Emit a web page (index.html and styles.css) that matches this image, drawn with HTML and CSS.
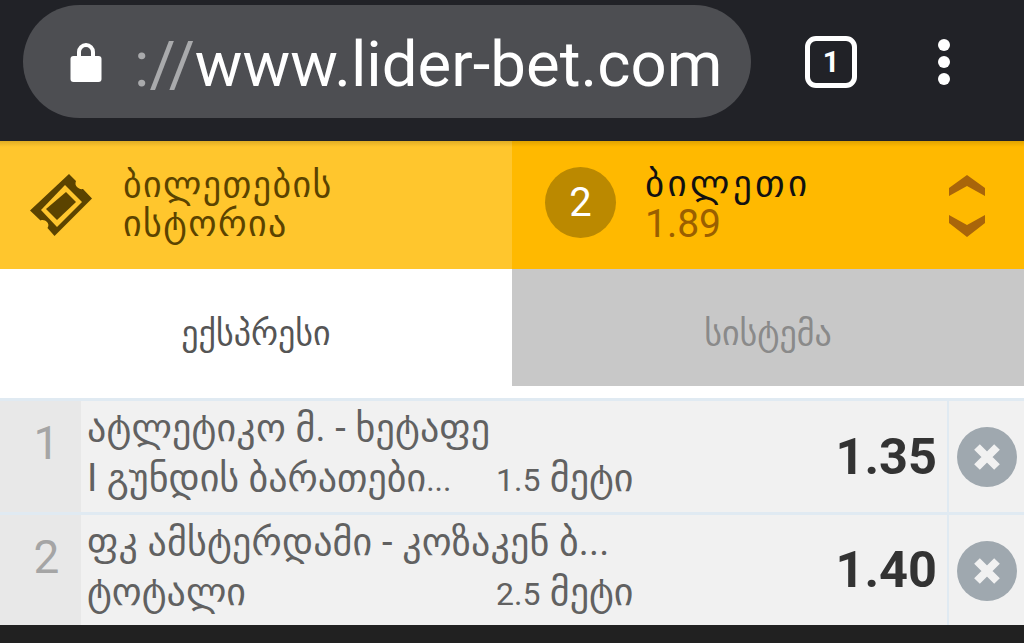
FILE: index.html
```html
<!DOCTYPE html>
<html lang="ka">
<head>
<meta charset="UTF-8" />
<meta name="viewport" content="width=device-width, initial-scale=1.0" />
<title>lider-bet</title>
<link rel="stylesheet" href="styles.css">
</head>

<body>
<!-- browser bar -->
<header class="chrome">
    <div class="url-pill">
        <svg class="lock" viewBox="0 0 32 42" aria-hidden="true">
            <path d="M9 18v-7a7 7 0 0 1 14 0v7" fill="none" stroke="#fff" stroke-width="4"/>
            <rect x="0.5" y="15" width="31" height="26" rx="3" fill="#fff"/>
        </svg>
        <span class="url"><span class="scheme">://</span>www.lider-bet.com</span>
    </div>
    <div class="tab-count"><span>1</span></div>
    <div class="menu-dots"><i></i><i></i><i></i></div>
</header>

<!-- ticket header -->
<section class="ticket-bar">
    <div class="history">
        <svg class="ticket-icon" viewBox="0 0 62 62" aria-hidden="true">
            <path d="M39 0l7 7c-1 2.500-0.500 4.500 1 6 1.500 1.500 3.500 2.500 6 2l9 9.500-37.500 37.500-7-8c1.500-2.500 1-4.500-0.500-6-1.500-1.500-4-2.500-6.500-1.500l-10.500-10z" fill="#5b4300"/>
            <path d="M35 11l17 17-25 25-16-17z" fill="#ffc62d"/>
            <path d="M36 18l10 10-19 18-11-11z" fill="#5b4300"/>
        </svg>
        <div class="history-label">ბილეთების<br>ისტორია</div>
    </div>
    <div class="slip">
        <div class="slip-count">2</div>
        <div class="slip-info">
            <div class="slip-title">ბილეთი</div>
            <div class="slip-odds">1.89</div>
        </div>
        <svg class="slip-arrows" viewBox="0 0 38 64" aria-hidden="true">
            <path d="M19 2l18 13v8L19 13 1 23v-8z" fill="#a9650a"/>
            <path d="M1 42l18 10 18-10v8L19 64 1 50z" fill="#a9650a"/>
        </svg>
    </div>
</section>

<!-- bet type tabs -->
<nav class="tabs">
    <div class="tab active">ექსპრესი</div>
    <div class="tab">სისტემა</div>
</nav>

<!-- selected bets -->
<section class="bets">
    <div class="bet">
        <div class="bet-num">1</div>
        <div class="bet-main">
            <div class="bet-name">ატლეტიკო მ. - ხეტაფე</div>
            <div class="bet-line"><span class="market">I გუნდის ბარათები<span class="digits">...</span></span><span class="pick"><span class="digits">1.5</span> მეტი</span></div>
        </div>
        <div class="bet-odds">1.35</div>
        <div class="bet-remove">
            <svg viewBox="0 0 60 60" aria-hidden="true"><circle cx="30" cy="30" r="30" fill="#9fa8af"/><path d="M20 20l20 20M40 20L20 40" stroke="#f1f1f1" stroke-width="8"/></svg>
        </div>
    </div>
    <div class="bet">
        <div class="bet-num">2</div>
        <div class="bet-main">
            <div class="bet-name">ფკ ამსტერდამი - კოზაკენ ბ...</div>
            <div class="bet-line"><span class="market">ტოტალი</span><span class="pick"><span class="digits">2.5</span> მეტი</span></div>
        </div>
        <div class="bet-odds">1.40</div>
        <div class="bet-remove">
            <svg viewBox="0 0 60 60" aria-hidden="true"><circle cx="30" cy="30" r="30" fill="#9fa8af"/><path d="M20 20l20 20M40 20L20 40" stroke="#f1f1f1" stroke-width="8"/></svg>
        </div>
    </div>
</section>

<div class="nav-strip"></div>
</body>
</html>
```

FILE: styles.css
```css
/* ========  RESET  ======== */
*, *::before, *::after { box-sizing: border-box; margin: 0; padding: 0; }
html, body { height: 643px; overflow: hidden; }
body {
    font-family: Roboto, "DejaVu Sans", sans-serif;
    background: #fff;
    color: #333;
    display: flex;
    flex-direction: column;
}

/* ========  BROWSER BAR  ======== */
.chrome {
    height: 141px;
    flex: none;
    background: #212227;
    display: flex;
    align-items: flex-start;
    padding: 5px 0 0 23px;
}
.url-pill {
    width: 728px;
    height: 113px;
    border-radius: 57px;
    background: #4d4e52;
    display: flex;
    align-items: center;
    padding-left: 47px;
}
.lock { width: 32px; height: 42px; margin-right: 32px; }
.url {
    font-size: 63.500px;
    color: #fff;
    line-height: 1;
    padding-top: 6px;
}
.scheme { color: #a9aaac; }
.tab-count {
    width: 52px;
    height: 52px;
    margin: 31px 0 0 54px;
    border: 5px solid #fff;
    border-radius: 11px;
    color: #fff;
    font-size: 29px;
    font-weight: 700;
    display: flex;
    align-items: center;
    justify-content: center;
}
.menu-dots {
    margin: 34px 0 0 81px;
    display: flex;
    flex-direction: column;
    gap: 5px;
}
.menu-dots i {
    display: block;
    width: 12px;
    height: 12px;
    border-radius: 50%;
    background: #fff;
}

/* ========  TICKET BAR  ======== */
.ticket-bar { height: 128px; flex: none; display: flex; }
.history, .slip {
    width: 512px;
    flex: none;
    display: flex;
    align-items: center;
}
.history {
    background: linear-gradient(#e0ad24, #ffc62d 6px);
    padding-left: 30px;
}
.ticket-icon { width: 62px; height: 62px; margin-right: 31px; flex: none; }
.history-label {
    font-size: 36px;
    line-height: 39px;
    letter-spacing: 1.400px;
    color: #5b4300;
    margin-top: -1px;
}
.slip {
    background: linear-gradient(#e0a300, #ffb900 6px);
    padding-left: 33px;
}
.slip-count {
    width: 71px;
    height: 71px;
    flex: none;
    margin-top: -5px;
    border-radius: 50%;
    background: #bb8900;
    color: #fff;
    font-size: 40px;
    display: flex;
    align-items: center;
    justify-content: center;
}
.slip-info { margin-left: 29px; width: 303px; flex: none; }
.slip-title {
    font-size: 37px;
    line-height: 38px;
    letter-spacing: 3.400px;
    color: #111;
    white-space: nowrap;
}
.slip-odds { font-size: 39px; line-height: 42px; color: #9a5f00; }
.slip-arrows { width: 38px; height: 64px; flex: none; }

/* ========  TABS  ======== */
.tabs { height: 117px; flex: none; display: flex; }
.tab {
    flex: 1 1 0;
    display: flex;
    align-items: center;
    justify-content: center;
    font-size: 34px;
    background: #c8c8c8;
    color: #8a8a8a;
    padding-top: 10px;
}
.tab.active { background: #fff; color: #555; }

/* ========  BET LIST  ======== */
.bets { margin-top: 12px; flex: none; }
.bet {
    height: 113.500px;
    display: flex;
    background: #f1f1f1;
    border-top: 3px solid #e0eaf2;
}
.bet-num {
    width: 81px;
    flex: none;
    background: #e8e8e8;
    color: #a5a5a5;
    font-size: 46px;
    display: flex;
    align-items: center;
    justify-content: center;
    padding: 0 0 26px 12px;
}
.bet-main {
    width: 640px;
    flex: none;
    padding: 4px 0 0 6px;
    color: #616161;
}
.bet-name { font-size: 38px; line-height: 46px; letter-spacing: .15px; white-space: nowrap; }
.bet-line { font-size: 38px; line-height: 46px; white-space: nowrap; margin-top: 4px; display: flex; }
.digits { font-size: 32px; }
.market { width: 409px; flex: none; }
.bet-odds {
    flex: 1 1 0;
    color: #333;
    font-size: 50.500px;
    font-weight: 700;
    display: flex;
    align-items: center;
    justify-content: flex-end;
    padding: 0 10px 0 0;
}
.bet-remove {
    width: 77px;
    flex: none;
    border-left: 2px solid #e0eaf2;
    padding: 26px 0 0 8px;
}
.bet-remove svg { display: block; width: 60px; height: 60px; }

/* ========  BOTTOM STRIP  ======== */
.nav-strip { flex: 1; background: #212121; }
```
